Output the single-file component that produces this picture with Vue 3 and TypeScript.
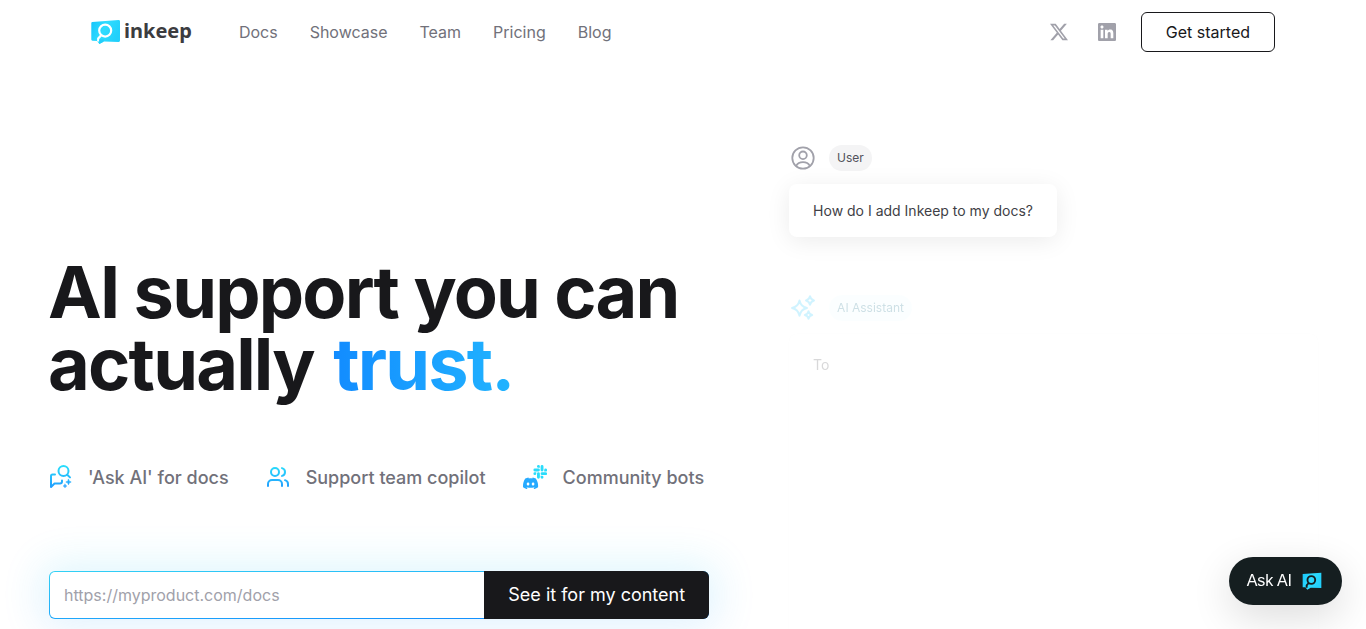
<script setup lang="ts">
import { ref } from 'vue'

interface NavLink {
  label: string
  href: string
}

const links: NavLink[] = [
  { label: 'Docs', href: '#docs' },
  { label: 'Showcase', href: '#showcase' },
  { label: 'Team', href: '#team' },
  { label: 'Pricing', href: '#pricing' },
  { label: 'Blog', href: '#blog' },
]

const productUrl = ref<string>('')
</script>

<template>
  <div class="page">
    <svg class="defs" width="0" height="0" aria-hidden="true">
      <defs>
        <linearGradient id="brand" gradientUnits="userSpaceOnUse" x1="0" y1="0" x2="0" y2="24">
          <stop offset="0" stop-color="#2ae0fb" />
          <stop offset="1" stop-color="#2299ff" />
        </linearGradient>
        <linearGradient id="mark" x1="0" y1="0" x2="1" y2="0.4">
          <stop offset="0" stop-color="#16c4fb" />
          <stop offset="0.5" stop-color="#2fdcff" />
          <stop offset="1" stop-color="#22d0fb" />
        </linearGradient>
      </defs>
    </svg>

    <header class="header">
      <a class="logo" href="#home" aria-label="inkeep">
        <svg class="logo-mark" viewBox="0 0 30 26" aria-hidden="true">
          <path d="M1.4 3 27.6.9Q29 .9 29 2.2V21.6Q29 23 27.6 22.9L13 22.4 8.4 25 6 22 1.4 21.7Q.3 21.6.3 20.5V4.2Q.3 3.1 1.4 3Z" fill="url(#mark)" />
          <circle cx="14.2" cy="11.6" r="6" fill="none" stroke="#fff" stroke-width="2.2" />
          <path d="M10.2 16.2 7.2 19.5V22.5" fill="none" stroke="#fff" stroke-width="2.2" />
          <path d="M8.3 20.3 13.5 20.4 12 23 8.2 25Z" fill="#22cffb" />
        </svg>
        <span class="wordmark">inkeep</span>
      </a>
      <nav class="nav" aria-label="Main">
        <a v-for="link in links" :key="link.label" :href="link.href">{{ link.label }}</a>
      </nav>
      <div class="actions">
        <a class="social" href="#x" aria-label="X">
          <svg viewBox="0 0 24 24" width="18" height="18" fill="currentColor"><path d="M18.901 1.153h3.68l-8.04 9.19L24 22.846h-7.406l-5.8-7.584-6.638 7.584H.474l8.6-9.83L0 1.154h7.594l5.243 6.932ZM17.61 20.644h2.039L6.486 3.24H4.298Z" /></svg>
        </a>
        <a class="social" href="#linkedin" aria-label="LinkedIn">
          <svg viewBox="0 0 24 24" width="18" height="18" fill="currentColor"><path d="M20.447 20.452h-3.554v-5.569c0-1.328-.027-3.037-1.852-3.037-1.853 0-2.136 1.445-2.136 2.939v5.667H9.351V9h3.414v1.561h.046c.477-.9 1.637-1.85 3.37-1.85 3.601 0 4.267 2.37 4.267 5.455v6.286zM5.337 7.433c-1.144 0-2.063-.926-2.063-2.065 0-1.138.92-2.063 2.063-2.063 1.14 0 2.064.925 2.064 2.063 0 1.139-.925 2.065-2.064 2.065zm1.782 13.019H3.555V9h3.564v11.452zM22.225 0H1.771C.792 0 0 .774 0 1.729v20.542C0 23.227.792 24 1.771 24h20.451C23.2 24 24 23.227 24 22.271V1.729C24 .774 23.2 0 22.222 0h.003z" /></svg>
        </a>
        <button class="start" type="button">Get started</button>
      </div>
    </header>

    <main class="hero">
      <section class="pitch">
        <h1>AI support you can actually <span class="trust">trust.</span></h1>

        <ul class="features">
          <li>
            <svg viewBox="0 0 24 24" width="24" height="24" fill="none" stroke="url(#brand)" stroke-width="2" stroke-linecap="round" stroke-linejoin="round" aria-hidden="true">
              <circle cx="15.5" cy="6" r="5" />
              <path d="M19.2 9.7 22 12.4M7 9.5H4.5Q3 9.5 3 11V22l3.5-3.5H12Q14 18.5 14 16.5V15.5" />
              <path d="M20.5 14.3 21.3 16.2 23.2 17 21.3 17.8 20.5 19.7 19.7 17.8 17.8 17 19.7 16.2ZM17 19.2 17.5 20.5 18.8 21 17.5 21.5 17 22.8 16.5 21.5 15.2 21 16.5 20.5Z" fill="url(#brand)" stroke-width="0.6" />
            </svg>
            'Ask AI' for docs
          </li>
          <li>
            <svg viewBox="0 0 24 24" width="24" height="24" fill="none" stroke="url(#brand)" stroke-width="2" stroke-linecap="round" stroke-linejoin="round" aria-hidden="true">
              <circle cx="9" cy="7" r="4" />
              <path d="M2 21v-2a4 4 0 0 1 4-4h6a4 4 0 0 1 4 4v2M16 3.13a4 4 0 0 1 0 7.75M22 21v-2a4 4 0 0 0-3-3.85" />
            </svg>
            Support team copilot
          </li>
          <li>
            <svg viewBox="0 0 24 24" width="24" height="24" aria-hidden="true">
              <g transform="translate(10.4 0) scale(.57)" fill="#2adcfb">
                <path d="M5.042 15.165a2.528 2.528 0 0 1-2.52 2.523A2.528 2.528 0 0 1 0 15.165a2.527 2.527 0 0 1 2.522-2.52h2.52v2.52zM6.313 15.165a2.527 2.527 0 0 1 2.521-2.52 2.527 2.527 0 0 1 2.521 2.52v6.313A2.528 2.528 0 0 1 8.834 24a2.528 2.528 0 0 1-2.521-2.522v-6.313zM8.834 5.042a2.528 2.528 0 0 1-2.521-2.52A2.528 2.528 0 0 1 8.834 0a2.528 2.528 0 0 1 2.521 2.522v2.52H8.834zM8.834 6.313a2.528 2.528 0 0 1 2.521 2.521 2.528 2.528 0 0 1-2.521 2.521H2.522A2.528 2.528 0 0 1 0 8.834a2.528 2.528 0 0 1 2.522-2.521h6.312zM18.956 8.834a2.528 2.528 0 0 1 2.522-2.521A2.528 2.528 0 0 1 24 8.834a2.528 2.528 0 0 1-2.522 2.521h-2.522V8.834zM17.688 8.834a2.528 2.528 0 0 1-2.523 2.521 2.527 2.527 0 0 1-2.52-2.521V2.522A2.527 2.527 0 0 1 15.165 0a2.528 2.528 0 0 1 2.523 2.522v6.312zM15.165 18.956a2.528 2.528 0 0 1 2.523 2.522A2.528 2.528 0 0 1 15.165 24a2.527 2.527 0 0 1-2.52-2.522v-2.522h2.52zM15.165 17.688a2.527 2.527 0 0 1-2.52-2.523 2.526 2.526 0 0 1 2.52-2.52h6.313A2.527 2.527 0 0 1 24 15.165a2.528 2.528 0 0 1-2.522 2.523h-6.313z" />
              </g>
              <g transform="translate(0 10.8) scale(.63)" fill="#26aaff">
                <path d="M20.317 4.3698a19.7913 19.7913 0 00-4.8851-1.5152.0741.0741 0 00-.0785.0371c-.211.3753-.4447.8648-.6083 1.2495-1.8447-.2762-3.68-.2762-5.4868 0-.1636-.3933-.4058-.8742-.6177-1.2495a.077.077 0 00-.0785-.037 19.7363 19.7363 0 00-4.8852 1.515.0699.0699 0 00-.0321.0277C.5334 9.0458-.319 13.5799.0992 18.0578a.0824.0824 0 00.0312.0561c2.0528 1.5076 4.0413 2.4228 5.9929 3.0294a.0777.0777 0 00.0842-.0276c.4616-.6304.8731-1.2952 1.226-1.9942a.076.076 0 00-.0416-.1057c-.6528-.2476-1.2743-.5495-1.8722-.8923a.077.077 0 01-.0076-.1277c.1258-.0943.2517-.1923.3718-.2914a.0743.0743 0 01.0776-.0105c3.9278 1.7933 8.18 1.7933 12.0614 0a.0739.0739 0 01.0785.0095c.1202.099.246.1981.3728.2924a.077.077 0 01-.0066.1276 12.2986 12.2986 0 01-1.873.8914.0766.0766 0 00-.0407.1067c.3604.698.7719 1.3628 1.225 1.9932a.076.076 0 00.0842.0286c1.961-.6067 3.9495-1.5219 6.0023-3.0294a.077.077 0 00.0313-.0552c.5004-5.177-.8382-9.6739-3.5485-13.6604a.061.061 0 00-.0312-.0286zM8.02 15.3312c-1.1825 0-2.1569-1.0857-2.1569-2.419 0-1.3332.9555-2.4189 2.157-2.4189 1.2108 0 2.1757 1.0952 2.1568 2.419 0 1.3332-.9555 2.4189-2.1569 2.4189zm7.9748 0c-1.1825 0-2.1569-1.0857-2.1569-2.419 0-1.3332.9554-2.4189 2.1569-2.4189 1.2108 0 2.1757 1.0952 2.1568 2.419 0 1.3332-.946 2.4189-2.1568 2.4189Z" />
              </g>
            </svg>
            Community bots
          </li>
        </ul>

        <form class="try" @submit.prevent>
          <input v-model="productUrl" type="url" aria-label="Documentation URL" placeholder="https://myproduct.com/docs" />
          <button type="submit">See it for my content</button>
        </form>
      </section>

      <section class="chat" aria-label="Example conversation">
        <div class="who">
          <svg viewBox="0 0 28 28" width="28" height="28" fill="none" stroke="#a1a1aa" stroke-width="1.8" stroke-linecap="round" aria-hidden="true">
            <circle cx="14" cy="14" r="10.7" />
            <circle cx="14" cy="11.3" r="3.8" />
            <path d="M7.3 21.6C8.5 19.3 11 18.1 14 18.1s5.5 1.2 6.7 3.5" />
          </svg>
          <span class="badge">User</span>
        </div>
        <p class="bubble">How do I add Inkeep to my docs?</p>

        <div class="reply">
          <div class="who">
            <svg viewBox="0 0 28 28" width="28" height="28" fill="none" stroke="#1cc8ff" stroke-width="2" stroke-linejoin="round" aria-hidden="true">
              <path d="M10.5 6.5Q11.8 12.7 18 14 11.8 15.3 10.5 21.8 9.2 15.3 3 14 9.2 12.7 10.5 6.5Z" />
              <path d="M21 2.3Q21.8 5.7 25 6.5 21.8 7.3 21 10.7 20.2 7.3 17 6.5 20.2 5.7 21 2.3ZM19.5 17.3Q20.2 20.3 23.2 21 20.2 21.7 19.5 24.8 18.8 21.7 15.8 21 18.8 20.3 19.5 17.3Z" />
            </svg>
            <span class="badge assistant">AI Assistant</span>
          </div>
          <p class="bubble answer">To</p>
        </div>
      </section>
    </main>

    <button class="ask" type="button">
      Ask AI
      <svg viewBox="0 0 30 26" width="20" height="18" aria-hidden="true">
        <path d="M1 2.5 29 .5V23.5L13 23 8 26 5 22.5 1 22.2Z" fill="url(#mark)" />
        <circle cx="14" cy="11.5" r="5.8" fill="none" stroke="#151e20" stroke-width="2.8" />
        <path d="M10 16 7 19.5V23" fill="none" stroke="#151e20" stroke-width="2.8" />
      </svg>
    </button>
  </div>
</template>

<style>
body {
  margin: 0;
  background: #fff;
}
</style>

<style scoped>
.page {
  display: flex;
  flex-direction: column;
  height: 100vh;
  overflow: hidden;
  font-family: Inter, "Liberation Sans", sans-serif;
  font-size: 16px;
  line-height: 24px;
  color: #18181b;
}

.page *,
.page *::before {
  box-sizing: border-box;
}

.defs {
  position: absolute;
}

button,
input {
  font: inherit;
}

a {
  color: inherit;
  text-decoration: none;
}

svg {
  flex: none;
}

.header {
  display: flex;
  align-items: center;
  width: 100%;
  max-width: 1184px;
  height: 64px;
  flex: none;
  margin: 0 auto;
}

.logo {
  display: flex;
  align-items: center;
  gap: 3px;
  margin-right: 47px;
}

.logo-mark {
  width: 30px;
  height: 26px;
}

.wordmark {
  padding-bottom: 2px;
  font-family: "Noto Sans", "Open Sans", sans-serif;
  font-size: 20px;
  font-weight: 700;
  color: #3c3c3f;
}

.nav {
  display: flex;
  gap: 32px;
  color: #71717a;
}

.actions {
  display: flex;
  align-items: center;
  margin-left: auto;
  gap: 24px;
}

.social {
  display: flex;
  width: 24px;
  justify-content: center;
  color: #a1a1aa;
}

.start {
  height: 40px;
  padding: 0 24px;
  margin-left: -2px;
  border: 1px solid #18181b;
  border-radius: 6px;
  background: #fff;
  color: #18181b;
}

.hero {
  display: grid;
  grid-template-columns: 5fr 4fr;
  gap: 80px;
  flex: 1;
  width: 100%;
  max-width: 1270px;
  min-height: 0;
  margin: 0 auto;
}

.pitch {
  padding-top: 192px;
}

h1 {
  margin: 0;
  font-size: 72px;
  font-weight: 700;
  line-height: 72px;
  letter-spacing: -0.025em;
  color: #18181b;
}

.trust {
  display: inline-block;
  padding-left: 4px;
  background: linear-gradient(to right, #128bff, #21b4ff);
  background-clip: text;
  -webkit-background-clip: text;
  color: transparent;
}

.features {
  display: flex;
  gap: 37px;
  margin: 64px 0 0;
  padding: 0;
  list-style: none;
  font-size: 18px;
  font-weight: 500;
  line-height: 28px;
  color: #71717a;
  white-space: nowrap;
}

.features li {
  display: flex;
  align-items: center;
  gap: 16px;
}

.features svg {
  margin-bottom: 2px;
}

.try {
  position: relative;
  display: flex;
  height: 48px;
  margin: 79px 0 0 1px;
  padding: 1px 0 1px 1px;
  border-radius: 6px;
  background: linear-gradient(176deg, #34d3f5, #0a80ff);
  isolation: isolate;
}

.try::before {
  content: "";
  position: absolute;
  inset: -8px;
  z-index: -2;
  border-radius: 16px;
  background: linear-gradient(#22d3ee, #2b8cff);
  filter: blur(20px);
  opacity: 0.14;
}

.try input {
  flex: 1;
  min-width: 0;
  padding: 0 14px;
  border: 0;
  border-radius: 5px 0 0 5px;
  outline: 0;
  background: #fff;
  color: #18181b;
}

.try input::placeholder {
  color: #a1a1aa;
  opacity: 1;
}

.try button {
  margin: -1px 0;
  padding: 0 24px;
  border: 0;
  border-radius: 0 6px 6px 0;
  background: #18181b;
  font-size: 18px;
  color: #fff;
}

.chat {
  display: flex;
  flex-direction: column;
  align-items: flex-start;
  padding-top: 80px;
  min-height: 0;
  font-size: 14px;
}

.who {
  display: flex;
  align-items: center;
  gap: 12px;
  height: 28px;
}

.badge {
  padding: 1px 8px;
  border-radius: 13px;
  background: #f4f4f5;
  font-size: 12px;
  color: #52525b;
}

.assistant {
  background: #ecfeff;
  color: #0e6784;
}

.bubble {
  margin: 12px 0 0;
  padding: 15px 24px 14px;
  border-radius: 8px;
  background: #fff;
  box-shadow: 0 4px 24px rgb(0 0 0 / 8%);
  color: #3f3f46;
}

.reply {
  display: flex;
  flex-direction: column;
  flex: 1;
  align-self: stretch;
  margin-top: 57px;
  opacity: 0.2;
}

.answer {
  flex: 1;
  margin-bottom: -40px;
  padding-top: 19px;
  box-shadow: 0 0 2px rgb(0 0 0 / 8%);
}

.ask {
  position: fixed;
  right: 24px;
  bottom: 24px;
  display: flex;
  align-items: center;
  gap: 10px;
  height: 48px;
  padding: 0 20px 0 18px;
  border: 0;
  border-radius: 24px;
  background: #151e20;
  box-shadow: 0 12px 40px rgb(0 0 0 / 14%);
  font-family: "Liberation Sans", Arial, sans-serif;
  color: #fff;
}
</style>
